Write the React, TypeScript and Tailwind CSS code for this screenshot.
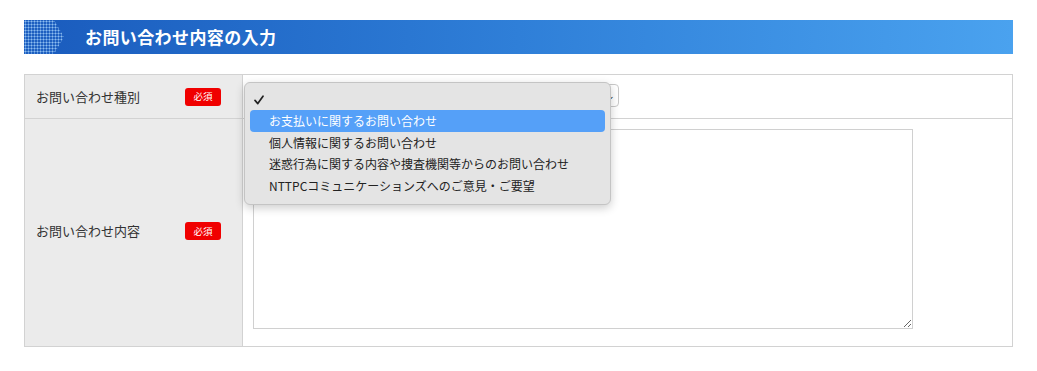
import React from 'react';

const options = [
  'お支払いに関するお問い合わせ',
  '個人情報に関するお問い合わせ',
  '迷惑行為に関する内容や捜査機関等からのお問い合わせ',
  'NTTPCコミュニケーションズへのご意見・ご要望',
];

const Required: React.FC = () => (
  <span className="inline-flex h-[18px] w-[36px] items-center justify-center rounded-[3px] bg-[#f00000] text-[9.5px] text-white">
    必須
  </span>
);

const App: React.FC = () => {
  return (
    <div className="min-h-[371px] w-[1037px] bg-white pt-5 font-['Noto_Sans_CJK_JP',sans-serif] text-[#333]">
      <div className="mx-6 flex h-[34px] items-center bg-linear-to-r from-[#1a5bbd] via-[#2f7fd8] to-[#4aa2ef]">
        <div className="h-full w-[40px] bg-[#1d5fc0] bg-[radial-gradient(circle,#8dbdf0_0.9px,transparent_1.1px)] bg-[length:3px_3px] [clip-path:polygon(0_0,75%_0,100%_50%,75%_100%,0_100%)]" />
        <h2 className="ml-[21px] text-[17px] font-bold tracking-[0.4px] text-white">お問い合わせ内容の入力</h2>
      </div>

      <div className="mx-6 mt-5 border border-[#d2d2d2]">
        <div className="flex h-[44px] border-b border-[#d2d2d2]">
          <div className="flex w-[218px] items-center justify-between border-r border-[#d2d2d2] bg-[#ebebeb] pl-[11px] pr-[21px] text-[13px]">
            <span>お問い合わせ種別</span>
            <Required />
          </div>
          <div className="relative flex-1">
            <div className="absolute left-[10px] top-[9px] flex h-[23px] w-[366px] items-center justify-end rounded-[4px] border border-[#c8c8c8] bg-white pr-[3px] text-[9px] leading-none text-[#222]">
              ⌄
            </div>
            <div className="absolute left-[1px] top-[7px] z-10 w-[367px] rounded-[6px] border border-[#c4c4c4] bg-[#e4e4e4] px-[5px] pb-[8px] pt-[6px] shadow-[0_3px_10px_rgba(0,0,0,0.2)]">
              <div className="flex h-[21px] items-center pl-[4px]">
                <svg width="10" height="10" viewBox="0 0 10 10">
                  <path d="M1 5.4 L3.8 8.6 L9 1.2" fill="none" stroke="#222" strokeWidth="1.7" strokeLinecap="round" strokeLinejoin="round" />
                </svg>
              </div>
              <div className="flex flex-col text-[12px] leading-[21.5px] text-[#222]">
                {options.map((o, i) => (
                  <div
                    key={o}
                    className={
                      i === 0
                        ? 'rounded-[4px] bg-[#55a0f8] pl-[19px] text-white'
                        : 'pl-[19px]'
                    }
                  >
                    {o}
                  </div>
                ))}
              </div>
            </div>
          </div>
        </div>
        <div className="flex h-[227px]">
          <div className="flex w-[218px] items-center justify-between border-r border-[#d2d2d2] bg-[#ebebeb] pb-[3px] pl-[11px] pr-[21px] text-[13px]">
            <span>お問い合わせ内容</span>
            <Required />
          </div>
          <div className="flex-1 pl-[10px] pt-[10px]">
            <textarea className="block h-[200px] w-[660px] border border-[#d0d0d0] bg-white" />
          </div>
        </div>
      </div>
    </div>
  );
};

export default App;
